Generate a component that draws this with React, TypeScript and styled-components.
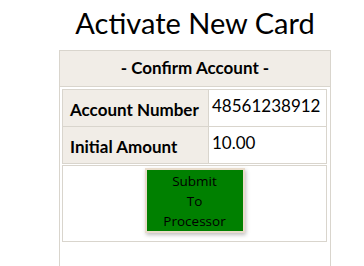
import styled, { createGlobalStyle } from "styled-components"

const GlobalStyle = createGlobalStyle`
  body {
    margin: 0;
    background: #ffffff;
    font-family: Lato, "Open Sans", sans-serif;
    color: #000000;
  }
`

const Page = styled.div`
  width: 272px;
  margin-left: 59px;
`

const Title = styled.h1`
  margin: 5px 0 10px 0;
  font-size: 29px;
  font-weight: 400;
  line-height: 35px;
  text-align: center;
`

const Panel = styled.div`
  border: 1px solid #d9d5cd;
  border-bottom: none;
  min-height: 215px;
`

const PanelHeader = styled.div`
  background: #f1ede7;
  border-bottom: 1px solid #d9d5cd;
  padding: 7px 0 8px 0;
  font-size: 17px;
  font-weight: 700;
  line-height: 20px;
  text-align: center;
`

const PanelBody = styled.div`
  padding: 2px 3px 0 2px;
`

const InfoTable = styled.div`
  display: grid;
  grid-template-columns: 146px 1fr;
  border: 1px solid #d9d5cd;
`

const LabelCell = styled.div<{ $last?: boolean }>`
  background: #f1ede7;
  border-right: 1px solid #d9d5cd;
  border-bottom: ${({ $last }) => ($last ? "none" : "1px solid #d9d5cd")};
  height: ${({ $last }) => ($last ? "36px" : "37px")};
  display: flex;
  align-items: center;
  padding: 3px 0 0 7px;
  box-sizing: border-box;
  font-size: 17px;
  font-weight: 700;
`

const ValueCell = styled.div<{ $last?: boolean }>`
  border-bottom: ${({ $last }) => ($last ? "none" : "1px solid #d9d5cd")};
  padding: 6px 0 0 3px;
  font-size: 17px;
  line-height: 20px;
`

const ActionTable = styled.div`
  margin-top: 1px;
  border: 1px solid #d9d5cd;
  height: 73px;
  display: flex;
  justify-content: center;
  padding-top: 2px;
  box-sizing: content-box;
`

const SubmitButton = styled.button`
  width: 100px;
  height: 65px;
  background: #008000;
  border: 2px solid #e9dccb;
  box-shadow: 1px 2px 4px rgba(0, 0, 0, 0.25);
  font-family: "Open Sans", sans-serif;
  font-size: 13.5px;
  line-height: 20px;
  color: #000000;
  padding: 0;
  cursor: pointer;
`

export default function App() {
  return (
    <Page>
      <GlobalStyle />
      <Title>Activate New Card</Title>
      <Panel>
        <PanelHeader>- Confirm Account -</PanelHeader>
        <PanelBody>
          <InfoTable>
            <LabelCell>Account Number</LabelCell>
            <ValueCell>48561238912</ValueCell>
            <LabelCell $last>Initial Amount</LabelCell>
            <ValueCell $last>10.00</ValueCell>
          </InfoTable>
          <ActionTable>
            <SubmitButton>
              Submit
              <br />
              To
              <br />
              Processor
            </SubmitButton>
          </ActionTable>
        </PanelBody>
      </Panel>
    </Page>
  )
}
